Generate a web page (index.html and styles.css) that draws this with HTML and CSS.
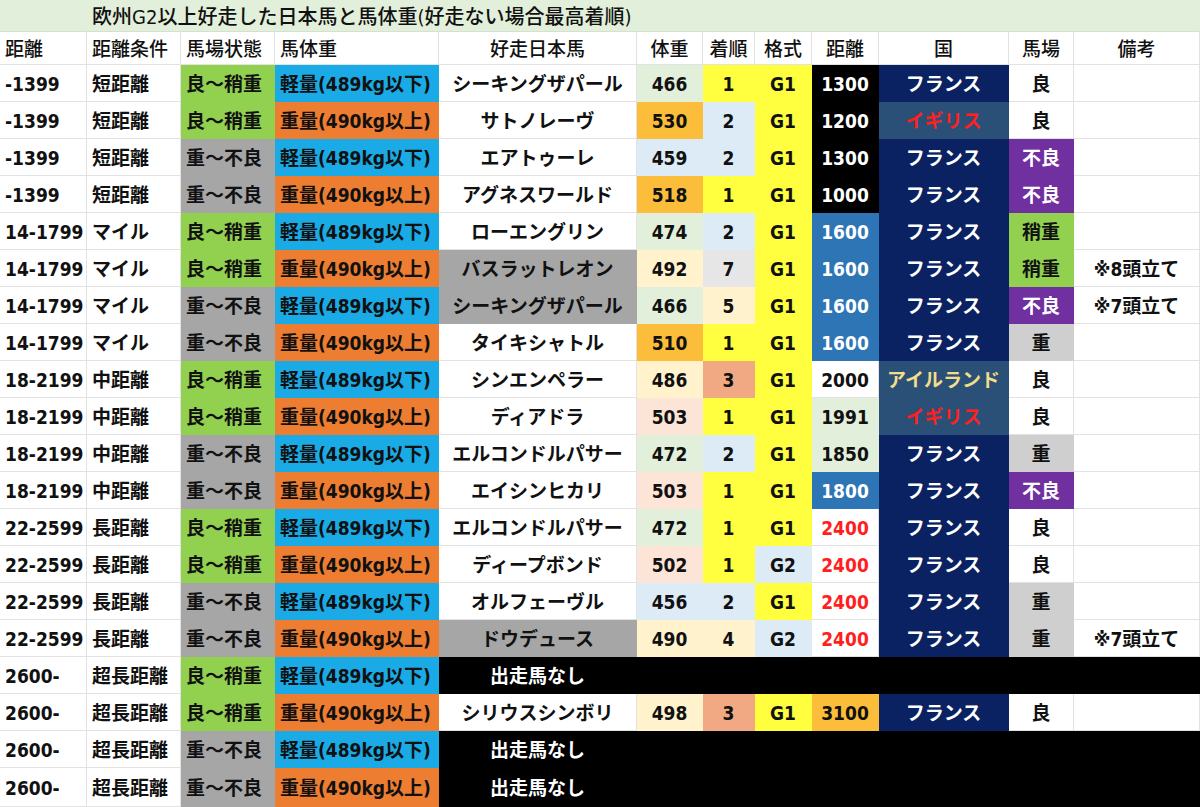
FILE: index.html
```html
<!DOCTYPE html>
<html lang="ja">
<head>
<meta charset="utf-8">
<title>欧州G2以上好走した日本馬と馬体重</title>
<link rel="stylesheet" href="styles.css">
</head>
<body>
<table class="sheet">
<colgroup>
<col class="c1"><col class="c2"><col class="c3"><col class="c4"><col class="c5"><col class="c6"><col class="c7"><col class="c8"><col class="c9"><col class="c10"><col class="c11"><col class="c12">
</colgroup>
<tr class="title"><td class="tl"></td><td class="tl tt" colspan="11">欧州G2以上好走した日本馬と馬体重(好走ない場合最高着順)</td></tr>
<tr class="head"><td class="l">距離</td><td class="l">距離条件</td><td class="l">馬場状態</td><td class="l">馬体重</td><td>好走日本馬</td><td>体重</td><td>着順</td><td>格式</td><td>距離</td><td>国</td><td>馬場</td><td>備考</td></tr>

<tr><td class="l">-1399</td><td class="l">短距離</td><td class="l g">良～稍重</td><td class="l bl">軽量(489kg以下)</td><td>シーキングザパール</td><td class="lg">466</td><td class="ye">1</td><td class="ye">G1</td><td class="bk">1300</td><td class="nv">フランス</td><td>良</td><td></td></tr>
<tr><td class="l">-1399</td><td class="l">短距離</td><td class="l g">良～稍重</td><td class="l or">重量(490kg以上)</td><td>サトノレーヴ</td><td class="yo">530</td><td class="lb">2</td><td class="ye">G1</td><td class="bk">1200</td><td class="st red">イギリス</td><td>良</td><td></td></tr>
<tr><td class="l">-1399</td><td class="l">短距離</td><td class="l gr">重～不良</td><td class="l bl">軽量(489kg以下)</td><td>エアトゥーレ</td><td class="lb">459</td><td class="lb">2</td><td class="ye">G1</td><td class="bk">1300</td><td class="nv">フランス</td><td class="pu">不良</td><td></td></tr>
<tr><td class="l">-1399</td><td class="l">短距離</td><td class="l gr">重～不良</td><td class="l or">重量(490kg以上)</td><td>アグネスワールド</td><td class="yo">518</td><td class="ye">1</td><td class="ye">G1</td><td class="bk">1000</td><td class="nv">フランス</td><td class="pu">不良</td><td></td></tr>

<tr><td class="l">14-1799</td><td class="l">マイル</td><td class="l g">良～稍重</td><td class="l bl">軽量(489kg以下)</td><td>ローエングリン</td><td class="lg">474</td><td class="lb">2</td><td class="ye">G1</td><td class="bu">1600</td><td class="nv">フランス</td><td class="g">稍重</td><td></td></tr>
<tr><td class="l">14-1799</td><td class="l">マイル</td><td class="l g">良～稍重</td><td class="l or">重量(490kg以上)</td><td class="gr">バスラットレオン</td><td class="cr">492</td><td class="ly">7</td><td class="ye">G1</td><td class="bu">1600</td><td class="nv">フランス</td><td class="g">稍重</td><td class="note">※8頭立て</td></tr>
<tr><td class="l">14-1799</td><td class="l">マイル</td><td class="l gr">重～不良</td><td class="l bl">軽量(489kg以下)</td><td class="gr">シーキングザパール</td><td class="lg">466</td><td class="cr">5</td><td class="ye">G1</td><td class="bu">1600</td><td class="nv">フランス</td><td class="pu">不良</td><td class="note">※7頭立て</td></tr>
<tr><td class="l">14-1799</td><td class="l">マイル</td><td class="l gr">重～不良</td><td class="l or">重量(490kg以上)</td><td>タイキシャトル</td><td class="yo">510</td><td class="ye">1</td><td class="ye">G1</td><td class="bu">1600</td><td class="nv">フランス</td><td class="hg">重</td><td></td></tr>

<tr><td class="l">18-2199</td><td class="l">中距離</td><td class="l g">良～稍重</td><td class="l bl">軽量(489kg以下)</td><td>シンエンペラー</td><td class="cr">486</td><td class="sa">3</td><td class="ye">G1</td><td>2000</td><td class="st gold">アイルランド</td><td>良</td><td></td></tr>
<tr><td class="l">18-2199</td><td class="l">中距離</td><td class="l g">良～稍重</td><td class="l or">重量(490kg以上)</td><td>ディアドラ</td><td class="pk">503</td><td class="ye">1</td><td class="ye">G1</td><td class="lg">1991</td><td class="st red">イギリス</td><td>良</td><td></td></tr>
<tr><td class="l">18-2199</td><td class="l">中距離</td><td class="l gr">重～不良</td><td class="l bl">軽量(489kg以下)</td><td>エルコンドルパサー</td><td class="lg">472</td><td class="lb">2</td><td class="ye">G1</td><td class="lg">1850</td><td class="nv">フランス</td><td class="hg">重</td><td></td></tr>
<tr><td class="l">18-2199</td><td class="l">中距離</td><td class="l gr">重～不良</td><td class="l or">重量(490kg以上)</td><td>エイシンヒカリ</td><td class="pk">503</td><td class="ye">1</td><td class="ye">G1</td><td class="bu">1800</td><td class="nv">フランス</td><td class="pu">不良</td><td></td></tr>

<tr><td class="l">22-2599</td><td class="l">長距離</td><td class="l g">良～稍重</td><td class="l bl">軽量(489kg以下)</td><td>エルコンドルパサー</td><td class="lg">472</td><td class="ye">1</td><td class="ye">G1</td><td class="red">2400</td><td class="nv">フランス</td><td>良</td><td></td></tr>
<tr><td class="l">22-2599</td><td class="l">長距離</td><td class="l g">良～稍重</td><td class="l or">重量(490kg以上)</td><td>ディープボンド</td><td class="pk">502</td><td class="ye">1</td><td class="lb">G2</td><td class="red">2400</td><td class="nv">フランス</td><td>良</td><td></td></tr>
<tr><td class="l">22-2599</td><td class="l">長距離</td><td class="l gr">重～不良</td><td class="l bl">軽量(489kg以下)</td><td>オルフェーヴル</td><td class="lb">456</td><td class="lb">2</td><td class="ye">G1</td><td class="red">2400</td><td class="nv">フランス</td><td class="hg">重</td><td></td></tr>
<tr><td class="l">22-2599</td><td class="l">長距離</td><td class="l gr">重～不良</td><td class="l or">重量(490kg以上)</td><td class="gr">ドウデュース</td><td class="cr">490</td><td class="cr">4</td><td class="lb">G2</td><td class="red">2400</td><td class="nv">フランス</td><td class="hg">重</td><td class="note">※7頭立て</td></tr>

<tr><td class="l">2600-</td><td class="l">超長距離</td><td class="l g">良～稍重</td><td class="l bl">軽量(489kg以下)</td><td class="bk">出走馬なし</td><td class="bk" colspan="7"></td></tr>
<tr><td class="l">2600-</td><td class="l">超長距離</td><td class="l g">良～稍重</td><td class="l or">重量(490kg以上)</td><td>シリウスシンボリ</td><td class="cr">498</td><td class="sa">3</td><td class="ye">G1</td><td class="yo">3100</td><td class="nv">フランス</td><td>良</td><td></td></tr>
<tr><td class="l">2600-</td><td class="l">超長距離</td><td class="l gr">重～不良</td><td class="l bl">軽量(489kg以下)</td><td class="bk">出走馬なし</td><td class="bk" colspan="7"></td></tr>
<tr class="last"><td class="l">2600-</td><td class="l">超長距離</td><td class="l gr">重～不良</td><td class="l or">重量(490kg以上)</td><td class="bk">出走馬なし</td><td class="bk" colspan="7"></td></tr>
</table>
</body>
</html>
```

FILE: styles.css
```css
html, body {
  margin: 0;
  padding: 0;
  background: #ffffff;
}

.sheet {
  width: 1200px;
  table-layout: fixed;
  border-collapse: separate;
  border-spacing: 0;
  font-family: "DejaVu Sans Condensed", "Noto Sans CJK JP", "Noto Sans", sans-serif;
  font-size: 19px;
  font-weight: 700;
  color: #111111;
}

.c1 { width: 87px; }
.c2 { width: 94px; }
.c3 { width: 94px; }
.c4 { width: 164px; }
.c5 { width: 198px; }
.c6 { width: 66px; }
.c7 { width: 52px; }
.c8 { width: 57px; }
.c9 { width: 67px; }
.c10 { width: 130px; }
.c11 { width: 65px; }
.c12 { width: 126px; }

.sheet tr {
  height: 37px;
}

.sheet tr.last {
  height: 39px;
}

.sheet td {
  padding: 2px 0 0 0;
  text-align: center;
  white-space: nowrap;
  overflow: hidden;
  line-height: 1;
  border-right: 1px solid #e2e2e2;
  border-bottom: 1px solid #e2e2e2;
}

.sheet tr.title {
  height: 32px;
}

.sheet tr.head {
  height: 33px;
}

.sheet td.tl {
  background: #e2efda;
  border-color: #e2efda;
  border-bottom-color: #d6dfd0;
}

.sheet td.tt {
  text-align: left;
  padding-left: 5px;
  font-size: 20px;
  font-weight: 500;
}

.sheet tr.head td {
  font-weight: 500;
}

.sheet td.l {
  text-align: left;
  padding-left: 5px;
}

/* fills */
.sheet td.g { background: #92d050; border-color: #92d050; }
.sheet td.gr { background: #a6a6a6; border-color: #a6a6a6; }
.sheet td.bl { background: #1aaae6; border-color: #1aaae6; }
.sheet td.or { background: #ed7d31; border-color: #ed7d31; }
.sheet td.lg { background: #e2efda; border-color: #e2efda; }
.sheet td.lb { background: #ddebf7; border-color: #ddebf7; }
.sheet td.cr { background: #fff2cc; border-color: #fff2cc; }
.sheet td.pk { background: #fce4d6; border-color: #fce4d6; }
.sheet td.yo { background: #fcbd3a; border-color: #fcbd3a; }
.sheet td.ye { background: #ffff40; border-color: #ffff40; }
.sheet td.sa { background: #f0a983; border-color: #f0a983; }
.sheet td.ly { background: #e6e6e6; border-color: #e6e6e6; }
.sheet td.hg { background: #cfcfcf; border-color: #cfcfcf; }
.sheet td.bk { background: #000000; border-color: #000000; color: #ffffff; }
.sheet td.bu { background: #2e75b6; border-color: #2e75b6; color: #ffffff; }
.sheet td.nv { background: #0a2262; border-color: #0a2262; color: #ffffff; }
.sheet td.st { background: #2a5077; border-color: #2a5077; }
.sheet td.pu { background: #7030a0; border-color: #7030a0; color: #ffffff; }

.sheet td.red { color: #ff1f1f; }
.sheet td.gold { color: #f2dd8a; }
```
